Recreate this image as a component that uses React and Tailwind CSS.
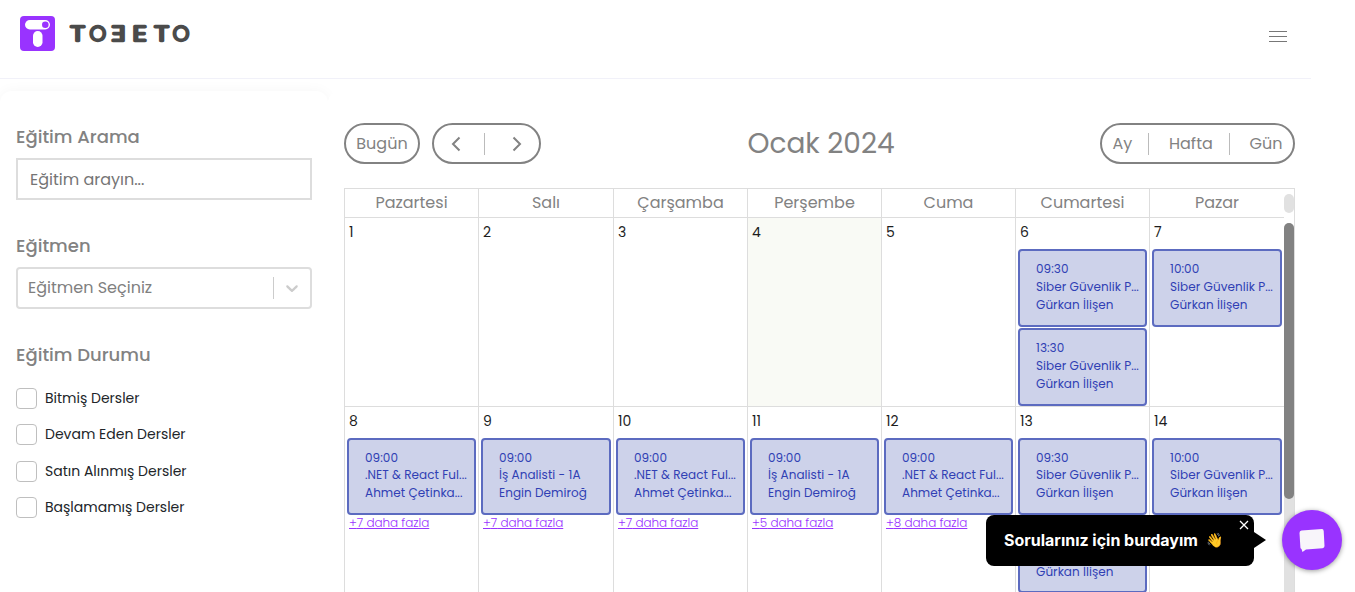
import React from "react";

const POP = "font-['Poppins','Inter',sans-serif]";

const events = {
  gf: (t) => [t, "Siber Güvenlik P...", "Gürkan İlişen"],
  net: (t) => [t, ".NET & React Ful...", "Ahmet Çetinka..."],
  ia: (t) => [t, "İş Analisti - 1A", "Engin Demiroğ"],
};

const weekOne = [
  { d: 1 }, { d: 2 }, { d: 3 }, { d: 4, today: true }, { d: 5 },
  { d: 6, ev: [events.gf("09:30"), events.gf("13:30")] },
  { d: 7, ev: [events.gf("10:00")] },
];
const weekTwo = [
  { d: 8, ev: [events.net("09:00")], more: 7 },
  { d: 9, ev: [events.ia("09:00")], more: 7 },
  { d: 10, ev: [events.net("09:00")], more: 7 },
  { d: 11, ev: [events.ia("09:00")], more: 5 },
  { d: 12, ev: [events.net("09:00")], more: 8 },
  { d: 13, ev: [events.gf("09:30"), events.gf("13:30")] },
  { d: 14, ev: [events.gf("10:00")] },
];
const days = ["Pazartesi", "Salı", "Çarşamba", "Perşembe", "Cuma", "Cumartesi", "Pazar"];
const COLS = "grid-cols-[134px_135px_134px_134px_134px_134px_134px]";

function Event({ lines, short, tight }) {
  return (
    <div className={`${short ? "h-[77px]" : "h-[78px]"} ${tight ? "leading-[17.4px]" : "leading-[18px]"} mx-[2px] mb-px shrink-0 overflow-hidden whitespace-nowrap rounded-[4px] border-2 border-[#5c6bc0] bg-[#cdd2ea] pl-4 pt-[9px] text-[12px] tracking-[0.05px] text-[#303fb4]`}>
      {lines.map((l) => <div key={l}>{l}</div>)}
    </div>
  );
}

function Week({ cells, short }) {
  return (
    <div className={`grid h-[189px] shrink-0 ${COLS}`}>
      {cells.map((c) => (
        <div key={c.d} className={`flex min-w-0 flex-col border-r border-t border-[#ddd] last:border-r-0 ${c.today ? "bg-[#f9faf5]" : ""}`}>
          <div className="h-[31px] shrink-0 pl-1 pt-[4px] text-[14px] leading-[21px] text-[#1d1d1d]">{c.d}</div>
          {(c.ev || []).map((e, i) => <Event key={i} lines={e} short={short} tight={short && i === 0} />)}
          {c.more && (
            <div className="-mt-[2px] pl-[4px] text-[12px] font-light leading-[17px] tracking-[-0.05px] text-[#9933ff] underline">
              +{c.more} daha fazla
            </div>
          )}
        </div>
      ))}
    </div>
  );
}

function Logo() {
  return (
    <div className="flex items-center">
      <svg width="35" height="35" viewBox="0 0 35 35">
        <rect width="35" height="35" rx="4" fill="#9933ff" />
        <rect x="5" y="4" width="25" height="9.5" rx="4.75" fill="#fff" />
        <circle cx="25.3" cy="8.7" r="3.3" fill="#9933ff" />
        <rect x="13" y="15" width="9.5" height="16" rx="4.7" fill="#fff" />
      </svg>
      <svg className="ml-[14px]" width="124" height="35" viewBox="0 0 124 35" fill="#4b4b4b" stroke="#4b4b4b" strokeWidth="2.4" strokeLinejoin="round" fontSize="21" fontWeight="300" textAnchor="middle">
        <text transform="translate(8.500 25) scale(1.35 1)">T</text>
        <text transform="translate(28.700 25)">O</text>
        <text transform="translate(49.500 25) scale(-1.35 1)">E</text>
        <text transform="translate(70.500 25) scale(1.35 1)">E</text>
        <text transform="translate(92.500 25) scale(1.35 1)">T</text>
        <text transform="translate(112 25)">O</text>
      </svg>
    </div>
  );
}

export default function App() {
  return (
    <div className={`${POP} relative h-[592px] w-[1355px] overflow-hidden bg-white text-[#828282]`}>
      <header className="flex h-[79px] w-[1311px] items-start justify-between border-b border-[#f1f1f9] pl-5 pr-6 pt-4">
        <Logo />
        <div className="mt-[15px] flex w-[18px] flex-col gap-1">
          <div className="h-px bg-[#777]" /><div className="h-px bg-[#777]" /><div className="h-px bg-[#777]" />
        </div>
      </header>
      <div className="flex h-[513px] pt-3">
        <aside className="h-[600px] w-[328px] shrink-0 rounded-[12px] px-4 pt-8 shadow-[0_0_14px_rgba(0,0,0,0.04)]">
          <h2 className="h-[35px] text-[18px] font-medium leading-[27px]">Eğitim Arama</h2>
          <div className="flex h-[42px] items-center border-2 border-[#ddd] pl-3 pt-[2px] text-[16px] text-[#757575]">Eğitim arayın...</div>
          <h2 className="mt-8 h-[35px] text-[18px] font-medium leading-[27px]">Eğitmen</h2>
          <div className="flex h-[42px] items-center rounded-[4px] border-2 border-[#ddd] pl-[10px] text-[16px] text-[#808080]">
            <span className="flex-1">Eğitmen Seçiniz</span>
            <span className="h-[22px] w-px bg-[#ccc]" />
            <svg className="mx-2" width="20" height="20" viewBox="0 0 20 20" fill="#ccc"><path d="M4.516 7.548c0.436-0.446 1.043-0.481 1.576 0l3.908 3.747 3.908-3.747c0.533-0.481 1.141-0.446 1.574 0 0.436 0.445 0.408 1.197 0 1.615-0.406 0.418-4.695 4.502-4.695 4.502-0.217 0.223-0.502 0.335-0.787 0.335s-0.57-0.112-0.789-0.335c0 0-4.287-4.084-4.695-4.502s-0.436-1.17 0-1.615z" /></svg>
          </div>
          <h2 className="mt-8 h-[47px] text-[18px] font-medium leading-[27px]">Eğitim Durumu</h2>
          <div className="flex flex-col gap-[15.4px] text-[14px] text-[#212529]">
            {["Bitmiş Dersler", "Devam Eden Dersler", "Satın Alınmış Dersler", "Başlamamış Dersler"].map((t) => (
              <div key={t} className="flex h-[21px] items-center gap-2">
                <span className="size-[21px] rounded-[4px] border border-[#bfbfbf]" />
                <span>{t}</span>
              </div>
            ))}
          </div>
        </aside>
        <main className="relative h-[600px] w-[983px] rounded-[12px] bg-white px-4 pt-8">
          <div className="flex h-[41px] items-center justify-between text-[16px]">
            <div className="flex gap-3">
              <div className="flex h-[41px] w-[76px] items-center justify-center rounded-full border-2 border-[#828282]">Bugün</div>
              <div className="flex h-[41px] w-[109px] items-center rounded-full border-2 border-[#828282]">
                <svg className="ml-[17px]" width="10" height="16" viewBox="0 0 10 16" fill="none" stroke="#828282" strokeWidth="2"><path d="M8.500 1.500 2 8l6.500 6.500" /></svg>
                <span className="ml-[23px] h-[22px] w-px bg-[#bbb]" />
                <svg className="ml-[27px]" width="10" height="16" viewBox="0 0 10 16" fill="none" stroke="#828282" strokeWidth="2"><path d="m1.500 1.500 6.500 6.500-6.500 6.500" /></svg>
              </div>
            </div>
            <h1 className="mr-[-1px] text-[28px] leading-none">Ocak 2024</h1>
            <div className="flex h-[41px] w-[195px] items-center rounded-full border-2 border-[#828282]">
              <span className="w-[46px] pl-[10.5px]">Ay</span>
              <span className="h-[22px] w-px bg-[#bbb]" />
              <span className="w-[80px] pl-5">Hafta</span>
              <span className="h-[22px] w-px bg-[#bbb]" />
              <span className="pl-[19.5px]">Gün</span>
            </div>
          </div>
          <div className="mt-6 flex h-[420px] border-l border-r border-t border-[#ddd]">
            <div className="flex w-[939px] flex-col">
              <div className={`grid h-[28px] shrink-0 text-center text-[16px] leading-[27px] ${COLS}`}>
                {days.map((d) => <div key={d} className="border-r border-[#ddd] last:border-r-0">{d}</div>)}
              </div>
              <Week cells={weekOne} />
              <Week cells={weekTwo} short />
            </div>
            <div className="w-[10px]">
              <div className="mt-[5px] h-[19px] rounded-full bg-[#e1e1e1]" />
              <div className="mt-[10px] h-[386px] rounded-[5px] bg-[#e1e1e1]"><div className="h-[276px] rounded-full bg-[#828282]" /></div>
            </div>
          </div>
        </main>
      </div>
      <div className="absolute left-[986px] top-[515px] flex h-[51px] w-[268px] items-center rounded-[8px] bg-black pb-[2px] pl-[18px] font-['Inter'] text-[16px] font-bold tracking-[-0.02px] text-white">
        Sorularınız için burdayım<span className="ml-2 text-[14px]">👋</span>
        <svg className="absolute right-[5px] top-[5px]" width="10" height="10" viewBox="0 0 10 10" stroke="#fff" strokeWidth="1.300"><path d="m1 1 8 8M9 1 1 9" /></svg>
        <svg className="absolute left-[268px] top-[17px]" width="12" height="16" viewBox="0 0 12 16"><path d="M0 0 12 8 0 16z" /></svg>
      </div>
      <div className="absolute left-[1282px] top-[509.500px] flex size-[60px] items-center justify-center rounded-full bg-[#9933ff] shadow-[0_1px_5px_rgba(0,0,0,0.4)]">
        <svg width="28" height="26" viewBox="0 0 28 26"><path d="M3.500 3.500 24 2Q25.500 2 25.700 4L26.500 19Q26.500 21 24.500 21.200L8 22.500 4.500 25 3.500 22Q2.500 21.500 2.400 20.500L1.500 6Q1.500 3.700 3.500 3.500Z" fill="#f8f5fa" /></svg>
      </div>
    </div>
  );
}
